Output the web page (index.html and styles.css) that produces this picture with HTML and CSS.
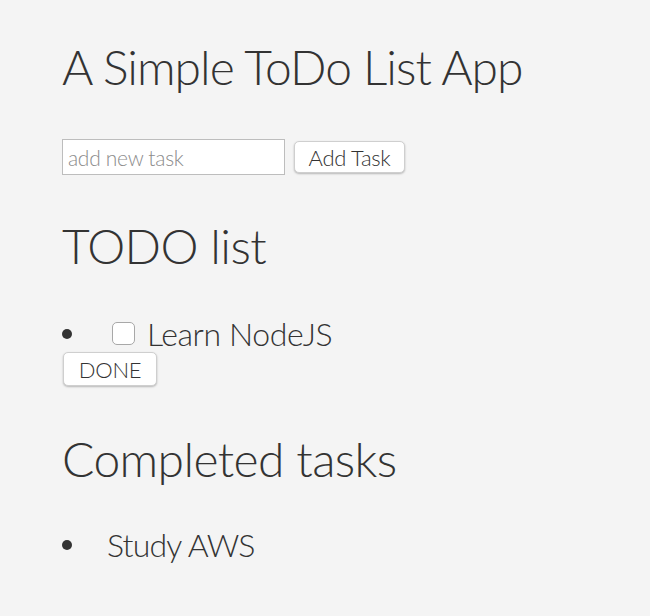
FILE: index.html
```html
<!DOCTYPE html>
<html lang="en">
<head>
<meta charset="utf-8">
<title>A Simple ToDo List App</title>
<link rel="stylesheet" href="styles.css">
</head>
<body>
<main class="app">
  <h1 class="title">A Simple ToDo List App</h1>
  <form class="add-form">
    <input class="task-input" type="text" placeholder="add new task">
    <button class="btn btn-add" type="button">Add Task</button>
  </form>

  <h2 class="section-title section-todo">TODO list</h2>
  <ul class="task-list">
    <li class="task">
      <div class="task-row">
        <input class="task-check" type="checkbox">
        <span class="task-name">Learn NodeJS</span>
      </div>
      <button class="btn btn-done" type="button">DONE</button>
    </li>
  </ul>

  <h2 class="section-title section-done">Completed tasks</h2>
  <ul class="task-list">
    <li class="task">
      <div class="task-row"><span class="task-name task-name-done">Study AWS</span></div>
    </li>
  </ul>
</main>
</body>
</html>
```

FILE: styles.css
```css
html, body {
  margin: 0;
  padding: 0;
  background: #f4f4f4;
}

body {
  font-family: "Lato Light", Lato, "Liberation Sans", sans-serif;
  font-weight: 300;
  color: #333;
}

.app {
  padding: 38px 62px 0;
}

.title {
  margin: 0;
  font-size: 48px;
  font-weight: 300;
  line-height: 58px;
  letter-spacing: -1px;
}

.add-form {
  display: flex;
  align-items: center;
  gap: 9px;
  margin-top: 43px;
}

.task-input {
  box-sizing: border-box;
  width: 223px;
  height: 36px;
  margin: 0;
  padding: 0 5px;
  border: 1px solid #bdbdbd;
  background: #fff;
  font-family: "Lato Light", Lato, sans-serif;
  font-weight: 300;
  font-size: 21px;
  letter-spacing: -0.3px;
  color: #333;
  outline: none;
}

.task-input::placeholder {
  color: #8c8c8c;
}

.btn {
  box-sizing: border-box;
  margin: 0;
  background: #fff;
  border: 1px solid #cfcfcf;
  border-radius: 5px;
  box-shadow: 0 1px 2px rgba(0, 0, 0, 0.25);
  font-family: "Lato Light", Lato, sans-serif;
  font-weight: 300;
  font-size: 22px;
  letter-spacing: -0.3px;
  color: #333;
  cursor: pointer;
}

.btn-add {
  width: 111px;
  height: 32px;
  padding: 0;
}

.section-title {
  margin: 0;
  font-size: 48px;
  font-weight: 300;
  line-height: 58px;
  letter-spacing: -0.6px;
}

.section-todo {
  margin-top: 42px;
}

.section-done {
  margin-top: 44px;
}

.task-list {
  margin: 40px 0 0;
  padding: 0;
  list-style: none;
  font-size: 32px;
}

.section-done + .task-list {
  margin-top: 38px;
}

.task-row {
  display: flex;
  align-items: center;
  height: 37px;
  line-height: 37px;
}

.task-row::before {
  content: "";
  flex: none;
  width: 10px;
  height: 10px;
  margin-right: 40px;
  border-radius: 50%;
  background: #333;
}

.task-name {
  letter-spacing: -0.4px;
}

.task-check {
  appearance: none;
  -webkit-appearance: none;
  box-sizing: border-box;
  width: 23px;
  height: 23px;
  margin: 0 12px 0 0;
  border: 1px solid #a8a8a8;
  border-radius: 5px;
  background: #fff;
}

.task-name-done {
  margin-left: -5px;
  letter-spacing: -0.8px;
}

.btn-done {
  display: block;
  width: 94px;
  height: 34px;
  margin-left: 1px;
  padding: 0;
}
```
